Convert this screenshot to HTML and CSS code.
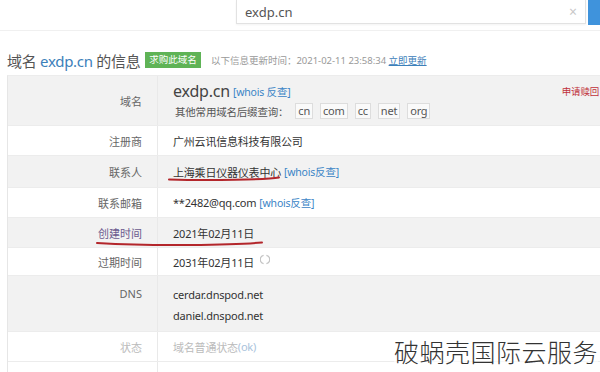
FILE: index.html
```html
<!DOCTYPE html>
<html lang="zh-CN">
<head>
    <meta charset="UTF-8">
    <title>域名 exdp.cn 的信息</title>
    <link rel="stylesheet" href="styles.css">
</head>
<body>

<!-- Пошук -->
<div class="topbar">
    <div class="search">
        <span class="search-text">exdp.cn</span>
        <span class="search-clear">×</span>
    </div>
    <div class="search-btn"></div>
</div>

<div class="page">
    <div class="title-row">
        <h2 class="title">域名 <span class="title-domain">exdp.cn</span> 的信息</h2>
        <span class="badge">求购此域名</span>
        <span class="update">以下信息更新时间：2021-02-11 23:58:34 <a class="update-link">立即更新</a></span>
    </div>

    <div class="info-table">
        <div class="row gray row-domain">
            <div class="label">域名</div>
            <div class="value">
                <div class="domain-line">
                    <span class="domain-name">exdp.cn</span>
                    <a class="link">[whois 反查]</a>
                    <span class="apply">申请赎回</span>
                </div>
                <div class="suffix-line">
                    其他常用域名后缀查询：
                    <span class="suffix">cn</span>
                    <span class="suffix">com</span>
                    <span class="suffix">cc</span>
                    <span class="suffix">net</span>
                    <span class="suffix">org</span>
                </div>
            </div>
        </div>
        <div class="row">
            <div class="label">注册商</div>
            <div class="value">广州云讯信息科技有限公司</div>
        </div>
        <div class="row gray row-tall">
            <div class="label">联系人</div>
            <div class="value">上海乘日仪器仪表中心 <a class="link">[whois反查]</a></div>
        </div>
        <div class="row">
            <div class="label">联系邮箱</div>
            <div class="value">**2482@qq.com <a class="link">[whois反查]</a></div>
        </div>
        <div class="row gray">
            <div class="label label-red">创建时间</div>
            <div class="value">2021年02月11日</div>
        </div>
        <div class="row row-short">
            <div class="label">过期时间</div>
            <div class="value">2031年02月11日
                <svg class="spinner" width="10" height="11" viewBox="0 0 10 11">
                    <path d="M3.6 1.4 A4.2 4.2 0 0 0 3.6 9.6" fill="none" stroke="#c4c4c4" stroke-width="1.2"/>
                    <path d="M6.4 1.4 A4.2 4.2 0 0 1 6.4 9.6" fill="none" stroke="#c4c4c4" stroke-width="1.2"/>
                </svg>
            </div>
        </div>
        <div class="row gray row-dns">
            <div class="label">DNS</div>
            <div class="value">
                <div class="dns-line">cerdar.dnspod.net</div>
                <div class="dns-line">daniel.dnspod.net</div>
            </div>
        </div>
        <div class="row row-faded">
            <div class="label">状态</div>
            <div class="value">域名普通状态<span class="ok">(ok)</span></div>
        </div>
        <div class="row row-empty">
            <div class="label"></div>
            <div class="value"></div>
        </div>
    </div>
</div>

<!-- Червоні позначки поверх таблиці -->
<svg class="marks" width="600" height="372" viewBox="0 0 600 372">
    <path d="M169 179.5 Q 200 180.5 235 179.8 T 279 177.5" fill="none" stroke="#b3262b" stroke-width="2" stroke-linecap="round"/>
    <path d="M97 243 Q 140 245.5 190 245 T 262 242.5" fill="none" stroke="#b3262b" stroke-width="2" stroke-linecap="round"/>
</svg>

<div class="watermark">破蜗壳国际云服务</div>

</body>
</html>
```

FILE: styles.css
```css
* {
    margin: 0;
    padding: 0;
    box-sizing: border-box;
}

body {
    width: 600px;
    height: 372px;
    overflow: hidden;
    position: relative;
    background: #fff;
    color: #444;
    font-family: "Noto Sans", "Noto Sans CJK SC", sans-serif;
}

/* Верхній пошук */
.topbar {
    display: flex;
    height: 31px;
    padding-left: 236px;
    border-bottom: 1px solid #f0f0f0;
}

.search {
    display: flex;
    align-items: center;
    justify-content: space-between;
    width: 351px;
    height: 24px;
    padding: 0 8px;
    border: 1px solid #e2e2e2;
    border-top: none;
    box-shadow: 0 1px 2px rgba(0, 0, 0, 0.05);
}

.search-text {
    font-size: 13px;
    color: #555;
}

.search-clear {
    font-size: 14px;
    color: #c8c8c8;
}

.search-btn {
    width: 12px;
    height: 25px;
    margin-left: 2px;
    background: #3f93dc;
}

.page {
    padding-left: 7px;
}

/* Заголовок */
.title-row {
    display: flex;
    align-items: center;
    height: 44px;
    padding-top: 14px;
}

.title {
    font-size: 15px;
    font-weight: normal;
    color: #555;
    letter-spacing: -0.3px;
}

.title-domain {
    color: #3c80ba;
}

.badge {
    margin-left: 5px;
    padding: 1px 4px;
    background: #5fb356;
    color: #fff;
    font-size: 9.5px;
    line-height: 14px;
}

.update {
    margin-left: 10px;
    font-size: 9.5px;
    color: #999;
}

.update-link {
    color: #3c80ba;
    text-decoration: underline;
}

/* Таблиця */
.info-table {
    width: 593px;
    border-left: 1px solid #e6e6e6;
    border-top: 1px solid #ececec;
}

.row {
    display: grid;
    grid-template-columns: 150px 1fr;
    height: 30px;
    border-bottom: 1px solid #ececec;
    background: #fff;
}

.row.gray {
    background: #f2f2f2;
}

.row-tall {
    height: 32px;
}

.row-short {
    height: 28px;
}

.label {
    display: flex;
    align-items: center;
    justify-content: flex-end;
    padding-right: 15px;
    border-right: 1px solid #e9e9e9;
    font-size: 11px;
    color: #666;
}

.label-red {
    color: #6b5a8e;
}

.value {
    display: flex;
    align-items: center;
    padding-left: 15px;
    font-size: 11px;
    letter-spacing: -0.2px;
    color: #333;
    white-space: nowrap;
}

.link {
    margin-left: 3px;
    color: #3a84c6;
    font-size: 10.5px;
}

/* Рядок домену */
.row-domain {
    height: 50px;
}

.row-domain .value {
    display: block;
    padding-top: 4px;
}

.domain-line {
    display: flex;
    align-items: center;
    height: 22px;
}

.domain-name {
    font-size: 16px;
    color: #444;
}

.apply {
    margin-left: auto;
    margin-right: 1px;
    font-size: 9.5px;
    color: #c0303a;
}

.suffix-line {
    display: flex;
    align-items: center;
    gap: 7px;
    height: 18px;
    padding-left: 2px;
    font-size: 10.5px;
    color: #555;
}

.suffix {
    padding: 0 2px;
    border: 1px solid #ddd;
    background: #fafafa;
    font-size: 11px;
    line-height: 14px;
    color: #555;
}

.spinner {
    margin-left: 6px;
    margin-top: -4px;
}

/* DNS */
.row-dns {
    height: 56px;
}

.row-dns .label {
    align-items: flex-start;
    padding-top: 10px;
}

.row-dns .value {
    display: block;
    padding-top: 8px;
}

.dns-line {
    height: 21px;
    line-height: 21px;
}

.row-faded .label,
.row-faded .value {
    color: #bbb;
}

.ok {
    color: #a9c3dc;
}

.row-empty {
    height: 20px;
}

/* Позначки і водяний знак */
.marks {
    position: absolute;
    left: 0;
    top: 0;
    pointer-events: none;
}

.watermark {
    position: absolute;
    right: 2px;
    bottom: 3px;
    font-family: "Noto Sans CJK SC", sans-serif;
    font-size: 25px;
    font-weight: 300;
    color: #333;
    letter-spacing: 0.5px;
    background: rgba(255, 255, 255, 0.6);
}
```
